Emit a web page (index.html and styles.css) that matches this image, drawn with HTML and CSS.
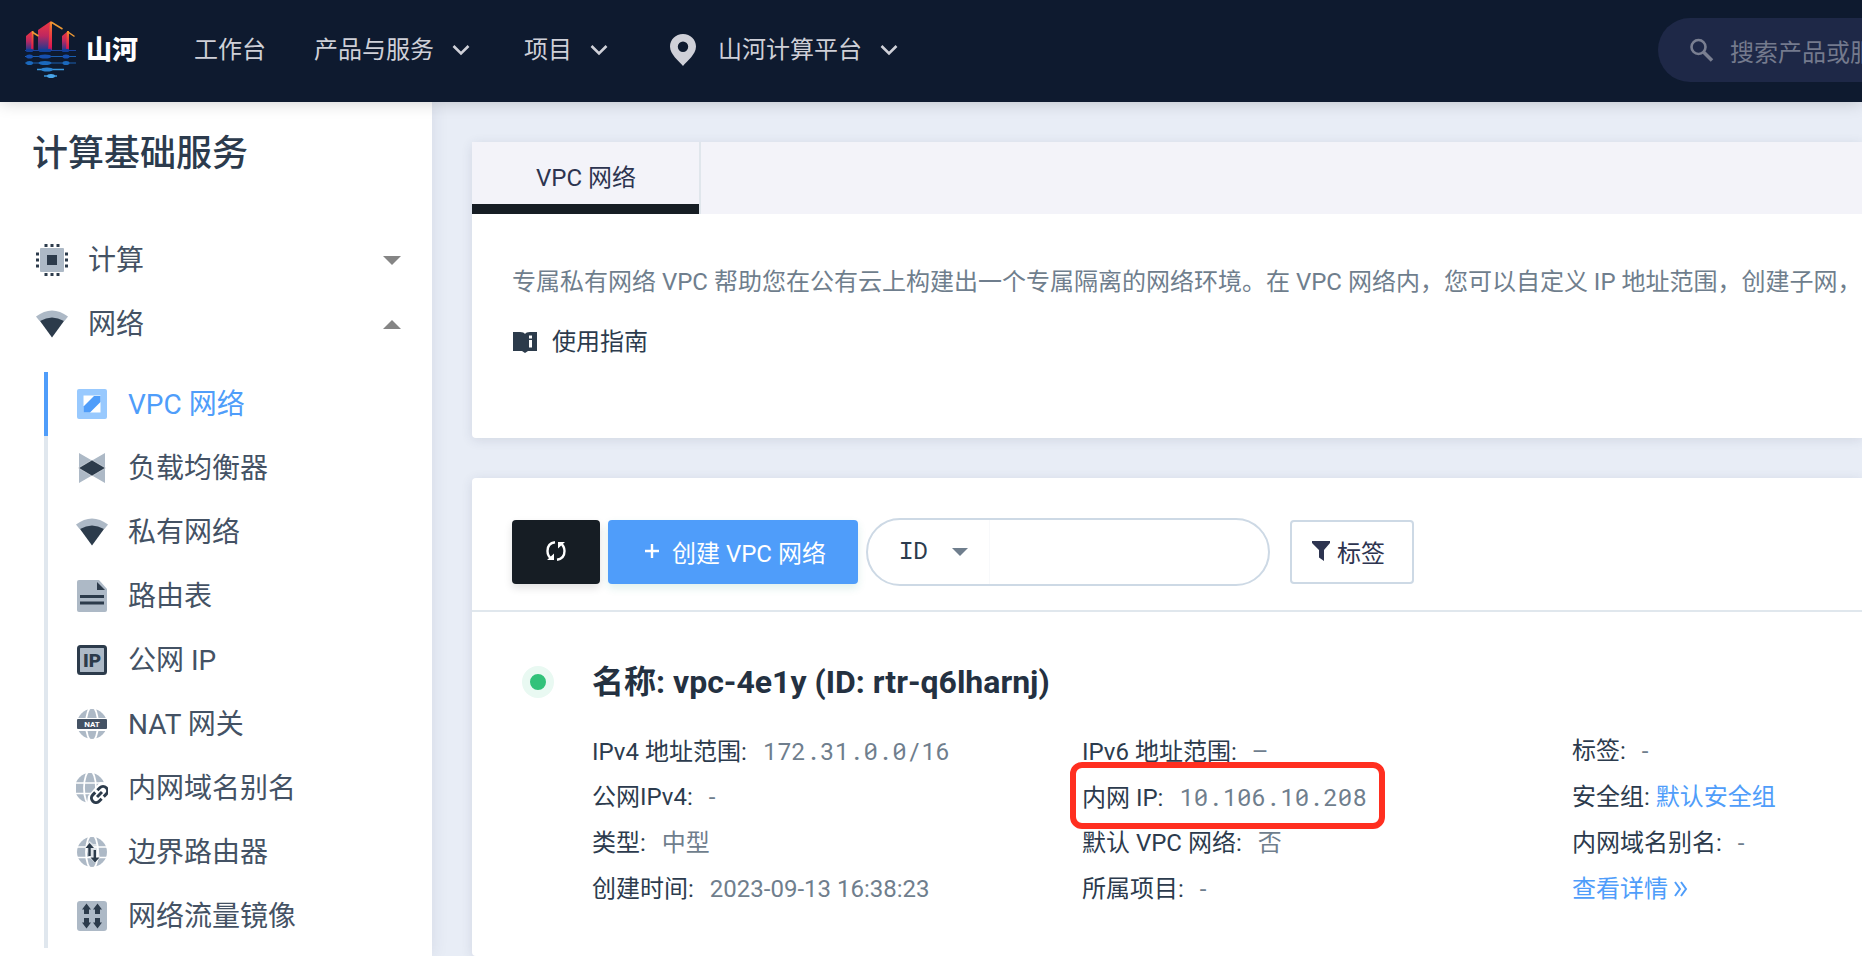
FILE: index.html
```html
<!DOCTYPE html>
<html lang="zh-CN">
<head>
<meta charset="utf-8">
<title>VPC 网络</title>
<link rel="stylesheet" href="styles.css">
</head>
<body>
<svg class="defs" aria-hidden="true">
  <defs>
    <symbol id="chevron" viewBox="0 0 18 12"><path d="M1.500 2l7.500 7.500 7.500-7.500" fill="none" stroke="currentColor" stroke-width="2.600"/></symbol>
    <symbol id="wifi" viewBox="0 0 32 32"><path d="M0 8.500Q16-3.500 32 8.500L28.500 13H3.500Z" fill="#adb9c6"/><path d="M4 13Q16 6 28 13L16 29.500Z" fill="#2c3b4b"/></symbol>
    <symbol id="globe" viewBox="0 0 32 32"><circle cx="16" cy="16" r="15" fill="#adb9c6"/><path d="M0 11h32M0 21.500h32" stroke="#fff" stroke-width="1.600"/><ellipse cx="16" cy="16" rx="6" ry="17" fill="none" stroke="#fff" stroke-width="1.800"/></symbol>
    <linearGradient id="tower" x1="0" y1="0" x2="0" y2="1"><stop offset="0" stop-color="#f2383f"/><stop offset=".5" stop-color="#bd2760"/><stop offset="1" stop-color="#123b94"/></linearGradient>
    <linearGradient id="side" x1="0" y1="0" x2="0" y2="1"><stop offset="0" stop-color="#f0932b"/><stop offset=".35" stop-color="#ee4c3c"/><stop offset=".85" stop-color="#dd1750"/><stop offset="1" stop-color="#5c2a88"/></linearGradient>
  </defs>
</svg>

<header class="topbar">
  <a class="brand" href="#">
    <svg class="brand-mark" viewBox="0 0 52 58" aria-hidden="true">
      <path d="M1 15l6-5v20H1z" fill="url(#tower)"/><path d="M7 10h1.500v20H6z" fill="url(#side)"/>
      <path d="M13 9L26 0v30H13z" fill="url(#tower)"/><path d="M25 1h2v29h-4z" fill="url(#side)"/>
      <path d="M37 15l6-5v20h-6z" fill="url(#tower)"/><path d="M42 10h2v20h-3z" fill="url(#side)"/>
      <path d="M7 11l6.500 4M26 1l11.500 7M43 11l6.500 4.500" stroke="#ee9a35" stroke-width="1.500" fill="none"/>
      <path d="M0 29.500h51" stroke="#1b449c" stroke-width="1"/><path d="M0 35.500h51M0 42h51" stroke="#1a5fb0" stroke-width="1.200"/><path d="M12 48.500h27M19 55h13" stroke="#3996dc" stroke-width="1.300"/>
      <g fill="#123f98"><rect x="1" y="28" width="7" height="3" rx="1"/><rect x="14" y="28" width="12" height="3" rx="1"/><rect x="37" y="28" width="7" height="3" rx="1"/></g>
      <g fill="#164fae"><ellipse cx="4.500" cy="35.500" rx="3.500" ry="2"/><ellipse cx="20" cy="35.500" rx="6.500" ry="2"/><ellipse cx="41" cy="35.500" rx="3.500" ry="2"/></g>
      <g fill="#1b69bd"><ellipse cx="4.500" cy="42" rx="3.500" ry="2"/><ellipse cx="20" cy="42" rx="6.500" ry="2"/><ellipse cx="41" cy="42" rx="3.500" ry="2"/></g>
      <ellipse cx="22" cy="48.500" rx="6" ry="2" fill="#2b82d0"/><ellipse cx="26" cy="55" rx="4" ry="2" fill="#4aa5e8"/>
    </svg>
    <span class="brand-name">山河</span>
  </a>
  <nav class="topnav">
    <a href="#">工作台</a>
    <button type="button">产品与服务<svg class="chev"><use href="#chevron"/></svg></button>
    <button type="button">项目<svg class="chev"><use href="#chevron"/></svg></button>
    <button type="button"><svg class="pin" viewBox="0 0 26 32"><path fill-rule="evenodd" d="M13 0C5.500 0 0 5.600 0 12.500 0 20.500 9 27 13 32c4-5 13-11.500 13-19.500C26 5.600 20.500 0 13 0zm0 7.500a5.200 5.200 0 1 1 0 10.400 5.200 5.200 0 0 1 0-10.400z" fill="currentColor"/></svg>山河计算平台<svg class="chev"><use href="#chevron"/></svg></button>
  </nav>
  <label class="global-search">
    <svg class="glass" viewBox="0 0 24 24" aria-hidden="true"><circle cx="8.500" cy="9" r="7" fill="none" stroke="currentColor" stroke-width="2.600"/><path d="M13.500 14l8.500 8.500" stroke="currentColor" stroke-width="3.600"/></svg>
    <input type="text" aria-label="搜索" placeholder="搜索产品或服务">
  </label>
</header>

<div class="layout">
  <aside class="sidebar">
    <h2 class="side-title">计算基础服务</h2>
    <button type="button" class="group">
      <svg class="icon" viewBox="0 0 32 32"><path d="M10 0v32M16 0v32M22 0v32M0 10h32M0 16h32M0 22h32" stroke="#2c3b4b" stroke-width="3"/><path d="M3 3h26v26H3z" fill="#fff"/><rect x="4" y="4" width="24" height="24" rx="1" fill="#adb9c6"/><path d="M11 11h10v10H11z" fill="#2c3b4b"/></svg>
      <span class="label">计算</span>
      <svg class="caret" viewBox="0 0 18 9"><path d="M0 0h18L9 9z" fill="currentColor"/></svg>
    </button>
    <button type="button" class="group">
      <svg class="icon"><use href="#wifi"/></svg>
      <span class="label">网络</span>
      <svg class="caret" viewBox="0 0 18 9"><path d="M0 9h18L9 0z" fill="currentColor"/></svg>
    </button>
    <ul class="submenu">
      <li class="active"><a href="#"><svg class="icon" viewBox="0 0 32 32"><rect x="1" y="1" width="30" height="30" rx="2" fill="#98c9fe"/><path d="M7.500 7.500h17v17h-17z" fill="#fff"/><path d="M18 8h6.500v6L14 24.500H7.500v-6z" fill="#4f9dfa"/></svg><span class="label">VPC 网络</span></a></li>
      <li><a href="#"><svg class="icon" viewBox="0 0 32 32"><path d="M3 1l13 7.500L29 1v30l-13-7.500L3 31z" fill="#adb9c6"/><path d="M16 8L29.500 16 16 24 2.500 16z" fill="#2c3b4b" stroke="#e5eaef" stroke-width=".6"/></svg><span class="label">负载均衡器</span></a></li>
      <li><a href="#"><svg class="icon"><use href="#wifi"/></svg><span class="label">私有网络</span></a></li>
      <li><a href="#"><svg class="icon" viewBox="0 0 32 32"><path d="M3 0h20l8 9v21a2 2 0 0 1-2 2H3a2 2 0 0 1-2-2V2a2 2 0 0 1 2-2z" fill="#adb9c6"/><path d="M21 2v8h8z" fill="#2c3b4b"/><path d="M4 16.500h24M4 23h24" stroke="#2c3b4b" stroke-width="3"/></svg><span class="label">路由表</span></a></li>
      <li><a href="#"><svg class="icon" viewBox="0 0 32 32"><rect x="2.500" y="2.500" width="27" height="27" rx="2" fill="#adb9c6" stroke="#2c3b4b" stroke-width="3"/><text x="16" y="23" text-anchor="middle" class="glyph-ip">IP</text></svg><span class="label">公网 IP</span></a></li>
      <li><a href="#"><svg class="icon" viewBox="0 0 32 32"><use href="#globe"/><path d="M0 10h32v13H0z" fill="#fff"/><rect x="1" y="11" width="30" height="10" rx="1" fill="#445264"/><text x="16" y="19" text-anchor="middle" class="glyph-nat">NAT</text></svg><span class="label">NAT 网关</span></a></li>
      <li><a href="#"><svg class="icon" viewBox="0 0 32 32"><g transform="translate(-2 0)"><use href="#globe" width="32" height="32"/></g><path d="M11 31l1-7L24 10l8 1v21H13z" fill="#fff"/><g transform="rotate(-45 23.500 22.500)" fill="none" stroke="#2c3b4b" stroke-width="3"><path d="M22 18h-3.500a4.500 4.500 0 0 0 0 9H22M25 18h3.500a4.500 4.500 0 0 1 0 9H25M20 22.500h7"/></g></svg><span class="label">内网域名别名</span></a></li>
      <li><a href="#"><svg class="icon" viewBox="0 0 32 32"><use href="#globe"/><path d="M11 8l2.500-3L17 8h5l2 14-5 5-6-6-3-8z" fill="#fff" opacity=".6"/><path d="M13.500 20V10M18.800 14v10" stroke="#2c3b4b" stroke-width="2.400"/><path d="M9.500 12l4-5 4.500 5zM14.500 21.500h9L19 26.500z" fill="#2c3b4b"/></svg><span class="label">边界路由器</span></a></li>
      <li><a href="#"><svg class="icon" viewBox="0 0 32 32"><rect x="1" y="1" width="30" height="30" rx="3" fill="#adb9c6"/><path d="M10.500 3.500L15 9.500h-2V14H8V9.500H6z M21.500 3.500L26 9.500h-2V14h-5V9.500h-2z M10.500 28.500L15 22.500h-2V18H8v4.500H6z M21.500 28.500L26 22.500h-2V18h-5v4.500h-2z" fill="#2c3b4b"/></svg><span class="label">网络流量镜像</span></a></li>
    </ul>
  </aside>

  <main class="main">
    <section class="card intro">
      <div class="tabs"><button type="button" class="tab">VPC 网络</button></div>
      <div class="intro-body">
        <p class="desc">专属私有网络 VPC 帮助您在公有云上构建出一个专属隔离的网络环境。在 VPC 网络内，您可以自定义 IP 地址范围，创建子网，</p>
        <a class="guide" href="#"><svg class="book" viewBox="0 0 24 24"><path fill-rule="evenodd" d="M0 2h7q4 0 5 2 1-2 5-2h7v19h-9l-3 2-3-2H0zM16 5.500v3h3v-3zM16 10v7.500h3V10z" fill="#2c3b4b"/></svg>使用指南</a>
      </div>
    </section>

    <section class="card list">
      <div class="toolbar">
        <button type="button" class="btn refresh" aria-label="刷新"><svg viewBox="0 0 20 20"><path d="M9 1.300C4 2 1.500 5.500 1.500 10c0 3.500 1.500 6 4 8M11 18.700c5-.7 7.500-4.200 7.500-8.700 0-3.500-1.500-6-4-8" fill="none" stroke="#fff" stroke-width="2.400"/><path d="M1 19h7v-6.500zM19 1h-7v6.500z" fill="#fff"/></svg></button>
        <button type="button" class="btn create"><svg class="plus" viewBox="0 0 14 14"><path d="M7 0v14M0 7h14" stroke="#fff" stroke-width="2.400"/></svg>创建 VPC 网络</button>
        <div class="filter">
          <div class="pick">
            <select aria-label="搜索字段"><option>ID</option></select>
            <svg class="pick-caret" viewBox="0 0 16 8" aria-hidden="true"><path d="M0 0h16L8 8z" fill="currentColor"/></svg>
          </div>
          <input type="text" aria-label="搜索内容">
        </div>
        <button type="button" class="btn tag"><svg class="funnel" viewBox="0 0 18 20"><path d="M0 0h18v2l-6 7v11l-5-3.500V9L0 2z" fill="currentColor"/></svg>标签</button>
      </div>

      <article class="vpc">
        <span class="status"></span>
        <div class="info">
          <h3 class="vpc-name">名称: vpc-4e1y (ID: rtr-q6lharnj)</h3>
          <div class="facts">
            <div>IPv4 地址范围:<span class="val mono">172.31.0.0/16</span></div>
            <div>IPv6 地址范围:<span class="val mono">–</span></div>
            <div>标签:<span class="val">-</span></div>
            <div>公网IPv4:<span class="val">-</span></div>
            <div><span class="marked">内网 IP:<span class="val mono">10.106.10.208</span></span></div>
            <div>安全组: <a href="#">默认安全组</a></div>
            <div>类型:<span class="val">中型</span></div>
            <div>默认 VPC 网络:<span class="val">否</span></div>
            <div>内网域名别名:<span class="val">-</span></div>
            <div>创建时间:<span class="val">2023-09-13 16:38:23</span></div>
            <div>所属项目:<span class="val">-</span></div>
            <div><a href="#">查看详情<svg class="more" viewBox="0 0 14 16"><path d="M1 1l5 7-5 7M7 1l5 7-5 7" fill="none" stroke="currentColor" stroke-width="2"/></svg></a></div>
          </div>
        </div>
      </article>
    </section>
  </main>
</div>
</body>
</html>
```
FILE: styles.css
```css
* { box-sizing: border-box; }

html, body { height: 100%; }

body {
  margin: 0;
  display: flex;
  flex-direction: column;
  overflow: hidden;
  background: #e8edf6;
  color: #2c3b4d;
  font-family: Roboto, "Noto Sans CJK SC", sans-serif;
  font-size: 24px;
}

button, input, select {
  font: inherit;
  color: inherit;
  background: none;
  border: 0;
  padding: 0;
  margin: 0;
  outline: 0;
}

a { color: #4f9dfa; text-decoration: none; }
h2, h3, p, ul { margin: 0; padding: 0; }
svg { flex: none; }
.defs { position: absolute; width: 0; height: 0; }

/* Top bar */
.topbar {
  position: relative;
  z-index: 2;
  flex: none;
  display: flex;
  align-items: center;
  height: 102px;
  padding: 0 0 2px 25px;
  background: #0e1a2f;
  box-shadow: 0 0 16px rgba(0, 0, 0, .2);
  line-height: 36px;
}
.brand { display: flex; align-items: center; gap: 9px; width: 169px; color: #fff; }
.brand-mark { width: 52px; height: 58px; }
.brand-name { font-size: 26px; font-weight: 900; }
.topnav { display: flex; align-items: center; gap: 48px; color: #cfd0d8; }
.topnav a { color: inherit; }
.topnav button { display: flex; align-items: center; }
.topnav button + button { margin-left: 6px; }
.chev { width: 18px; height: 12px; margin-left: 18px; }
.pin { width: 26px; height: 32px; margin: 0 22px 0 8px; }
.global-search {
  display: flex;
  align-items: center;
  gap: 16px;
  flex: none;
  width: 204px;
  height: 64px;
  margin-left: auto;
  padding-left: 32px;
  border-radius: 32px 0 0 32px;
  background: #1e2847;
  color: #7a7f91;
}
.glass { width: 24px; height: 24px; }
.global-search input { flex: 1; min-width: 0; height: 64px; padding-top: 6px; }
.global-search input::placeholder { color: #747a8d; opacity: 1; }

/* Page columns */
.layout { flex: 1; min-height: 0; display: flex; }

.sidebar {
  flex: none;
  width: 432px;
  background: #fff;
  box-shadow: 0 0 16px rgba(40, 50, 90, .1);
  font-size: 28px;
}
.side-title {
  padding: 26px 32px 48px;
  font-size: 36px;
  font-weight: 500;
  line-height: 52px;
}
.group {
  display: flex;
  align-items: center;
  gap: 20px;
  width: 100%;
  height: 64px;
  padding: 0 31px 0 36px;
  color: #445264;
  text-align: left;
}
.label { flex: 1; padding-bottom: 4px; }
.icon { width: 32px; height: 32px; }
.caret { width: 18px; height: 9px; color: #858585; }
.submenu { list-style: none; margin: 16px 0 0 44px; }
.submenu li { border-left: 4px solid #e0e7ee; }
.submenu .active { border-color: #4f9dfa; }
.submenu a {
  display: flex;
  align-items: center;
  gap: 20px;
  height: 64px;
  padding-left: 28px;
  color: #445264;
}
.submenu .active a { color: #4f9dfa; }
.glyph-ip { font: 900 19px Roboto, sans-serif; fill: #2c3b4b; }
.glyph-nat { font: 700 8px Roboto, sans-serif; fill: #fff; }

.main {
  flex: 1;
  min-width: 0;
  display: flex;
  flex-direction: column;
  gap: 40px;
  padding: 40px 0 0 40px;
}
.card {
  background: #fff;
  border-radius: 4px 0 0 4px;
  box-shadow: 0 2px 12px rgba(50, 60, 90, .12);
}

/* Intro */
.tabs { background: #f3f3f9; }
.tab {
  height: 72px;
  padding: 0 63px 6px 64px;
  border-right: 2px solid #e0e6ec;
  box-shadow: inset 0 -10px #161d24;
  color: #2d3450;
}
.intro-body { padding: 50px 0 74px 40px; line-height: 36px; }
.desc { color: #6f7e8d; white-space: nowrap; overflow: hidden; }
.guide { display: inline-flex; align-items: center; gap: 15px; margin: 24px 0 0 1px; color: #2c3b4d; }
.book { width: 24px; height: 24px; }

/* VPC list */
.list { flex: 1; }
.toolbar {
  display: flex;
  align-items: center;
  height: 134px;
  padding: 16px 40px 0;
  gap: 8px;
  border-bottom: 2px solid #e0e7ed;
}
.btn {
  display: flex;
  align-items: center;
  justify-content: center;
  height: 64px;
  padding-bottom: 2px;
  border-radius: 4px;
}
.refresh { width: 88px; background: #161d24; box-shadow: 0 4px 8px rgba(0, 0, 0, .12); }
.refresh svg { width: 20px; height: 20px; }
.create {
  gap: 13px;
  padding: 0 32px 2px 37px;
  background: #4f9dfa;
  color: #fff;
  box-shadow: 0 4px 8px rgba(30, 150, 120, .14);
}
.plus { width: 14px; height: 14px; }
.filter {
  display: flex;
  width: 404px;
  height: 68px;
  border: 2px solid #cdd9e5;
  border-radius: 34px;
  overflow: hidden;
}
.pick { display: grid; align-items: center; width: 122px; border-right: 1px solid #f8f9fb; }
.pick select, .pick-caret { grid-area: 1 / 1; }
.pick select { appearance: none; height: 64px; padding: 0 0 4px 31px; font-family: "Roboto Mono", "Liberation Mono", monospace; }
.pick-caret { justify-self: end; width: 16px; height: 8px; margin-right: 21px; color: #6f7e8d; pointer-events: none; }
.filter input { flex: 1; min-width: 0; padding: 0 20px; }
.tag { gap: 7px; margin-left: 12px; padding: 0 27px 2px 20px; border: 2px solid #cdd9e5; color: #2d3450; }
.funnel { width: 18px; height: 20px; }

.vpc { display: flex; gap: 38px; padding: 46px 0 0 50px; }
.status {
  flex: none;
  width: 32px;
  height: 32px;
  margin-top: 8px;
  border: 8px solid #e9f9f2;
  border-radius: 50%;
  background: #32c27a;
}
.info { flex: 1; min-width: 0; }
.vpc-name { margin-bottom: 22px; font-size: 32px; font-weight: 700; line-height: 48px; color: #243141; }
.facts {
  display: grid;
  grid-template-columns: 49fr 49fr 29fr;
  grid-auto-rows: 46px;
  line-height: 46px;
  white-space: nowrap;
}
.val { margin-left: 16px; color: #6f7e8d; }
.mono { font-family: "Roboto Mono", "Liberation Mono", monospace; }
.marked { position: relative; display: inline-block; }
.marked::after {
  content: "";
  position: absolute;
  inset: -12px -18px -8px -12px;
  border: 6px solid #ff2f20;
  border-radius: 12px;
}
.more { width: 14px; height: 16px; margin-left: 6px; }
```
